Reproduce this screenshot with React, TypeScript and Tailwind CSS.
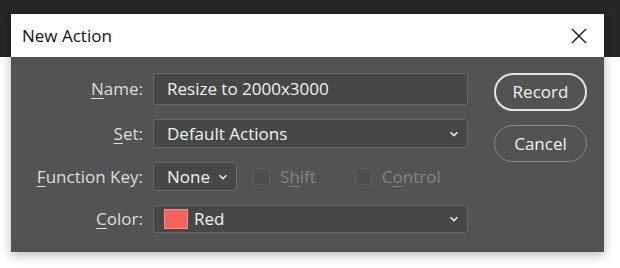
import { ReactNode } from "react";

const font = { fontFamily: '"Open Sans", "Noto Sans", sans-serif' };

function Chevron() {
  return (
    <svg width="10" height="6" viewBox="0 0 10 6" className="shrink-0">
      <path d="M1.5 1.2 L5 4.6 L8.5 1.2" fill="none" stroke="#e8e8e8" strokeWidth="1.6" />
    </svg>
  );
}

function Label({ k, rest }: { k: string; rest: string }) {
  return (
    <div className="flex items-center justify-end text-[17px] text-[#dedede]">
      <span className="underline underline-offset-[3px] decoration-1">{k}</span>
      {rest}
    </div>
  );
}

function Select({ children, h }: { children: ReactNode; h: string }) {
  return (
    <div
      className={`flex items-center justify-between w-[315px] ${h} pl-[13px] pr-[8px] rounded-[3px] border border-[#686868] bg-[#474747] text-[17px] text-[#f2f2f2]`}
    >
      <div className="flex items-center">{children}</div>
      <Chevron />
    </div>
  );
}

function Check({ k, rest, pre }: { k: string; rest: string; pre: string }) {
  return (
    <div className="flex items-center gap-[10px] text-[17px] text-[#858585]">
      <div className="w-[17px] h-[17px] rounded-[2px] border border-[#5e5e5e] bg-[#4e4e4e]" />
      <span>
        {pre}
        <span className="underline underline-offset-[3px] decoration-1">{k}</span>
        {rest}
      </span>
    </div>
  );
}

export default function App() {
  return (
    <div
      className="w-[620px] h-[268px] pt-[14px] pl-[11px] bg-[linear-gradient(to_bottom,#272727_57px,#ffffff_57px)]"
      style={font}
    >
      <div className="w-[593px] shadow-[0_3px_10px_rgba(0,0,0,0.28)]">
        {/* Title bar */}
        <div className="flex items-center justify-between h-[43px] bg-white pl-[11px] pr-[17px]">
          <span className="text-[17px] text-[#111]">New Action</span>
          <svg width="16" height="16" viewBox="0 0 16 16">
            <path d="M1 1 L15 15 M15 1 L1 15" stroke="#111" strokeWidth="1.4" />
          </svg>
        </div>

        {/* Body */}
        <div className="flex h-[195px] bg-[#535353] pt-[16px]">
          <div className="grid grid-cols-[132px_315px] gap-x-[10px] gap-y-[14px] content-start">
            <Label k="N" rest="ame:" />
            <div className="flex items-center w-[315px] h-[32px] pl-[13px] rounded-[2px] border border-[#686868] bg-[#474747] text-[17px] text-[#f2f2f2]">
              Resize to 2000x3000
            </div>

            <Label k="S" rest="et:" />
            <Select h="h-[29px]">Default Actions</Select>

            <Label k="F" rest="unction Key:" />
            <div className="flex items-center h-[29px]">
              <div className="flex items-center justify-between w-[84px] h-[29px] pl-[13px] pr-[8px] rounded-[3px] border border-[#686868] bg-[#474747] text-[17px] text-[#f2f2f2]">
                None
                <Chevron />
              </div>
              <div className="ml-[16px]">
                <Check pre="S" k="h" rest="ift" />
              </div>
              <div className="ml-[39px]">
                <Check pre="C" k="o" rest="ntrol" />
              </div>
            </div>

            <Label k="C" rest="olor:" />
            <Select h="h-[28px]">
              <div className="w-[24px] h-[20px] -ml-[3px] mr-[6px] bg-[#f4655f] border border-[#ff8a84]" />
              Red
            </Select>
          </div>

          <div className="flex flex-col gap-[14px] ml-[26px]">
            <div className="flex items-center justify-center w-[93px] h-[38px] rounded-full border-2 border-[#e4e4e4] text-[17px] text-[#f2f2f2]">
              Record
            </div>
            <div className="flex items-center justify-center w-[93px] h-[37px] rounded-full border-[1.5px] border-[#8a8a8a] text-[17px] text-[#f2f2f2]">
              Cancel
            </div>
          </div>
        </div>
      </div>
    </div>
  );
}
